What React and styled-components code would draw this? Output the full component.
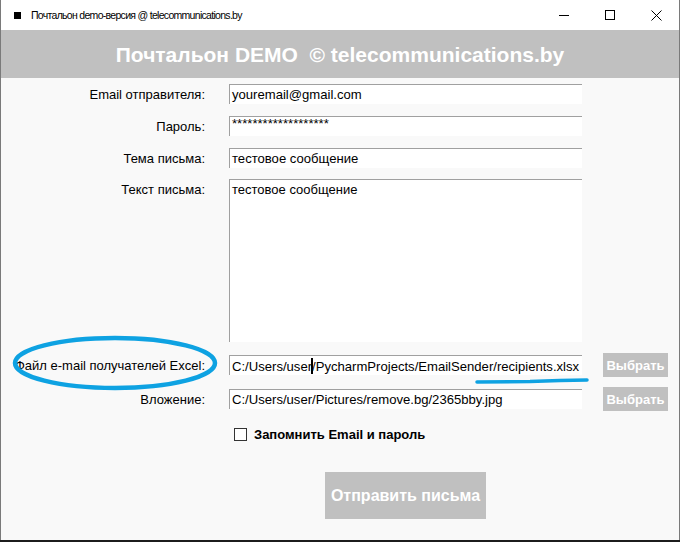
import React from "react";
import styled, { createGlobalStyle } from "styled-components";

const Global = createGlobalStyle`
  html, body {
    margin: 0;
    padding: 0;
    background: #1c1c1c;
  }
  body {
    font-family: "Liberation Sans", Arial, sans-serif;
    overflow: hidden;
  }
`;

const fields = [
  { label: "Email отправителя:", value: "youremail@gmail.com", top: 6 },
  { label: "Пароль:", value: "*******************", top: 12, password: true },
  { label: "Тема письма:", value: "тестовое сообщение", top: 12 },
];

export default function App() {
  return (
    <>
      <Global />
      <Window>
        <TitleBar>
          <AppIcon />
          <Title>Почтальон demo-версия @ telecommunications.by</Title>
          <Controls>
            <Control>
              <svg width="10" height="10" viewBox="0 0 10 10">
                <path d="M0 5.5h10" stroke="#000" strokeWidth="1" />
              </svg>
            </Control>
            <Control>
              <svg width="10" height="10" viewBox="0 0 10 10">
                <rect x="0.5" y="0.5" width="9" height="9" fill="none" stroke="#000" strokeWidth="1" />
              </svg>
            </Control>
            <Control>
              <svg width="11" height="11" viewBox="0 0 11 11">
                <path d="M0.5 0.5l10 10M10.5 0.5l-10 10" stroke="#000" strokeWidth="1" />
              </svg>
            </Control>
          </Controls>
        </TitleBar>

        <Header>Почтальон DEMO&nbsp; © telecommunications.by</Header>

        <Body>
          {fields.map((f) => (
            <Row key={f.label} $top={f.top}>
              <Label>{f.label}</Label>
              <Field $password={f.password}>{f.value}</Field>
            </Row>
          ))}

          <Row $top={11} $align="flex-start">
            <Label $offset={3}>Текст письма:</Label>
            <TextArea>тестовое сообщение</TextArea>
          </Row>

          <Row $top={11}>
            <Label>Файл e-mail получателей Excel:</Label>
            <Field>
              C:/Users/user<Caret />/PycharmProjects/EmailSender/recipients.xlsx
            </Field>
            <PickButton>Выбрать</PickButton>
          </Row>

          <Row $top={10}>
            <Label>Вложение:</Label>
            <Field>C:/Users/user/Pictures/remove.bg/2365bby.jpg</Field>
            <PickButton>Выбрать</PickButton>
          </Row>

          <CheckRow>
            <CheckBox />
            <CheckLabel>Запомнить Email и пароль</CheckLabel>
          </CheckRow>

          <SendWrap>
            <SendButton>Отправить письма</SendButton>
          </SendWrap>
        </Body>

        <Annotation width="680" height="540" viewBox="0 0 680 540">
          <ellipse cx="115" cy="363" rx="100" ry="25" fill="none" stroke="#0ea2e2" strokeWidth="4.5" />
          <path d="M477 382 L530 381.5 L560 380.5 L587 380" fill="none" stroke="#0ea2e2" strokeWidth="3.5" strokeLinecap="round" />
        </Annotation>
      </Window>
    </>
  );
}

const Window = styled.div`
  position: relative;
  width: 678px;
  height: 540px;
  background: #f9f9f9;
  border-left: 1px solid #7a7a7a;
  border-right: 1px solid #7a7a7a;
  display: flex;
  flex-direction: column;
`;

const TitleBar = styled.div`
  height: 30px;
  background: #ffffff;
  display: flex;
  align-items: center;
  flex-shrink: 0;
`;

const AppIcon = styled.span`
  width: 7px;
  height: 7px;
  background: #000;
  margin-left: 13px;
  margin-right: 10px;
  margin-top: 1px;
`;

const Title = styled.span`
  font-family: "Liberation Sans", Arial, sans-serif;
  font-size: 10.5px;
  letter-spacing: -0.7px;
  color: #000;
  flex: 1;
`;

const Controls = styled.div`
  display: flex;
  height: 100%;
`;

const Control = styled.div`
  width: 46px;
  height: 30px;
  display: flex;
  align-items: center;
  justify-content: center;
`;

const Header = styled.div`
  height: 48px;
  background: #c0c0c0;
  color: #ffffff;
  font-family: "Liberation Sans", Arial, sans-serif;
  font-weight: bold;
  font-size: 21px;
  display: flex;
  align-items: center;
  justify-content: center;
  padding-top: 2px;
  box-sizing: border-box;
  flex-shrink: 0;
`;

const Body = styled.div`
  display: flex;
  flex-direction: column;
  flex: 1;
`;

const Row = styled.div`
  display: flex;
  align-items: ${(p) => p.$align || "center"};
  margin-top: ${(p) => p.$top}px;
`;

const Label = styled.div`
  width: 204px;
  text-align: right;
  font-size: 13px;
  color: #000;
  margin-right: 24px;
  padding-top: ${(p) => p.$offset || 0}px;
  white-space: nowrap;
`;

const Field = styled.div`
  width: 353px;
  height: 20px;
  box-sizing: border-box;
  background: #ffffff;
  border-top: 1px solid #a0a0a0;
  border-left: 1px solid #a0a0a0;
  padding: ${(p) => (p.$password ? "1px 0 0 2px" : "2px 0 0 2px")};
  font-size: 13.1px;
  line-height: ${(p) => (p.$password ? "12px" : "16px")};
  color: #000;
  white-space: nowrap;
  overflow: hidden;
  position: relative;
`;

const Caret = styled.span`
  display: inline-block;
  width: 2px;
  height: 16px;
  background: #000;
  vertical-align: -3px;
  margin: 0 -1px;
`;

const TextArea = styled.div`
  width: 353px;
  height: 163px;
  box-sizing: border-box;
  background: #ffffff;
  border-top: 1px solid #a0a0a0;
  border-left: 1px solid #a0a0a0;
  padding: 2px 0 0 2px;
  font-size: 13px;
  line-height: 16px;
  color: #000;
`;

const PickButton = styled.div`
  margin-left: 21px;
  width: 65px;
  height: 24px;
  background: #c0c0c0;
  color: #ffffff;
  font-weight: bold;
  font-size: 13px;
  display: flex;
  align-items: center;
  justify-content: center;
`;

const CheckRow = styled.div`
  display: flex;
  align-items: center;
  margin-top: 16px;
  margin-left: 233px;
`;

const CheckBox = styled.span`
  width: 11px;
  height: 11px;
  border: 1px solid #333;
  background: #fff;
  margin-right: 7px;
`;

const CheckLabel = styled.span`
  font-size: 13px;
  font-weight: bold;
  color: #000;
`;

const SendWrap = styled.div`
  display: flex;
  margin-top: 30px;
  margin-left: 324px;
`;

const SendButton = styled.div`
  width: 161px;
  height: 47px;
  background: #c0c0c0;
  color: #ffffff;
  font-weight: bold;
  font-size: 16px;
  display: flex;
  align-items: center;
  justify-content: center;
`;

const Annotation = styled.svg`
  position: absolute;
  left: -1px;
  top: 0;
  pointer-events: none;
`;
